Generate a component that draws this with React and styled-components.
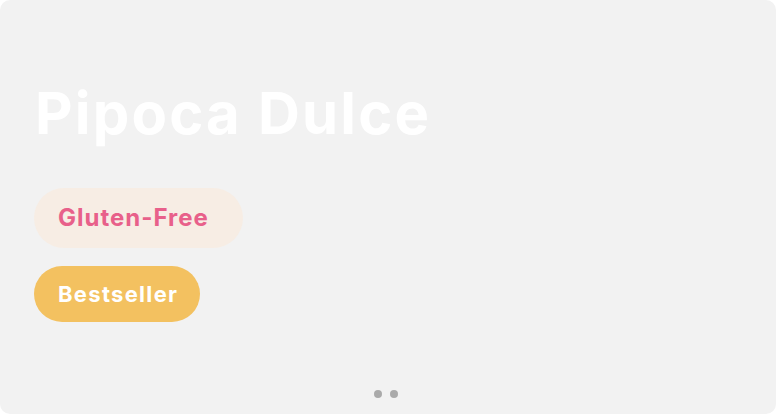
import React from "react";
import styled, { createGlobalStyle } from "styled-components";

const Global = createGlobalStyle`
  html, body { margin: 0; padding: 0; background: #ffffff; }
  body { font-family: Inter, "Noto Sans", sans-serif; }
`;

const Card = styled.section`
  box-sizing: border-box;
  width: 776px;
  height: 414px;
  background: #f2f2f2;
  border-radius: 10px;
  padding: 84px 34px 16px 34px;
  display: flex;
  flex-direction: column;
  align-items: flex-start;
`;

const Title = styled.h1`
  margin: 0 0 46px 1px;
  font-family: Inter, sans-serif;
  font-weight: 700;
  font-size: 58px;
  line-height: 58px;
  color: #ffffff;
  letter-spacing: 2.2px;
  white-space: nowrap;
`;

const Tags = styled.div`
  display: flex;
  flex-direction: column;
  align-items: flex-start;
  gap: 18px;
`;

const Pill = styled.span`
  box-sizing: border-box;
  display: inline-flex;
  align-items: center;
  height: ${(p) => p.$h}px;
  padding: 0 ${(p) => p.$pr}px 0 24px;
  border-radius: 999px;
  background: ${(p) => p.$bg};
  color: ${(p) => p.$fg};
  font-family: Inter, sans-serif;
  font-weight: 700;
  font-size: ${(p) => p.$fs}px;
  letter-spacing: ${(p) => p.$ls}px;
  line-height: 1;
  white-space: nowrap;
`;

const Dots = styled.div`
  margin-top: auto;
  align-self: stretch;
  display: flex;
  justify-content: center;
  gap: 8px;
  padding-right: 4px;
`;

const Dot = styled.span`
  width: 8px;
  height: 8px;
  border-radius: 50%;
  background: #aaaaaa;
`;

export default function App() {
  return (
    <>
      <Global />
      <Card>
        <Title>Pipoca Dulce</Title>
        <Tags>
          <Pill $h={60} $pr={34} $fs={24} $ls={1} $bg="#f7ede4" $fg="#e8608a">
            Gluten-Free
          </Pill>
          <Pill $h={56} $pr={22} $fs={22} $ls={1.3} $bg="#f3c160" $fg="#ffffff">
            Bestseller
          </Pill>
        </Tags>
        <Dots>
          <Dot />
          <Dot />
        </Dots>
      </Card>
    </>
  );
}
